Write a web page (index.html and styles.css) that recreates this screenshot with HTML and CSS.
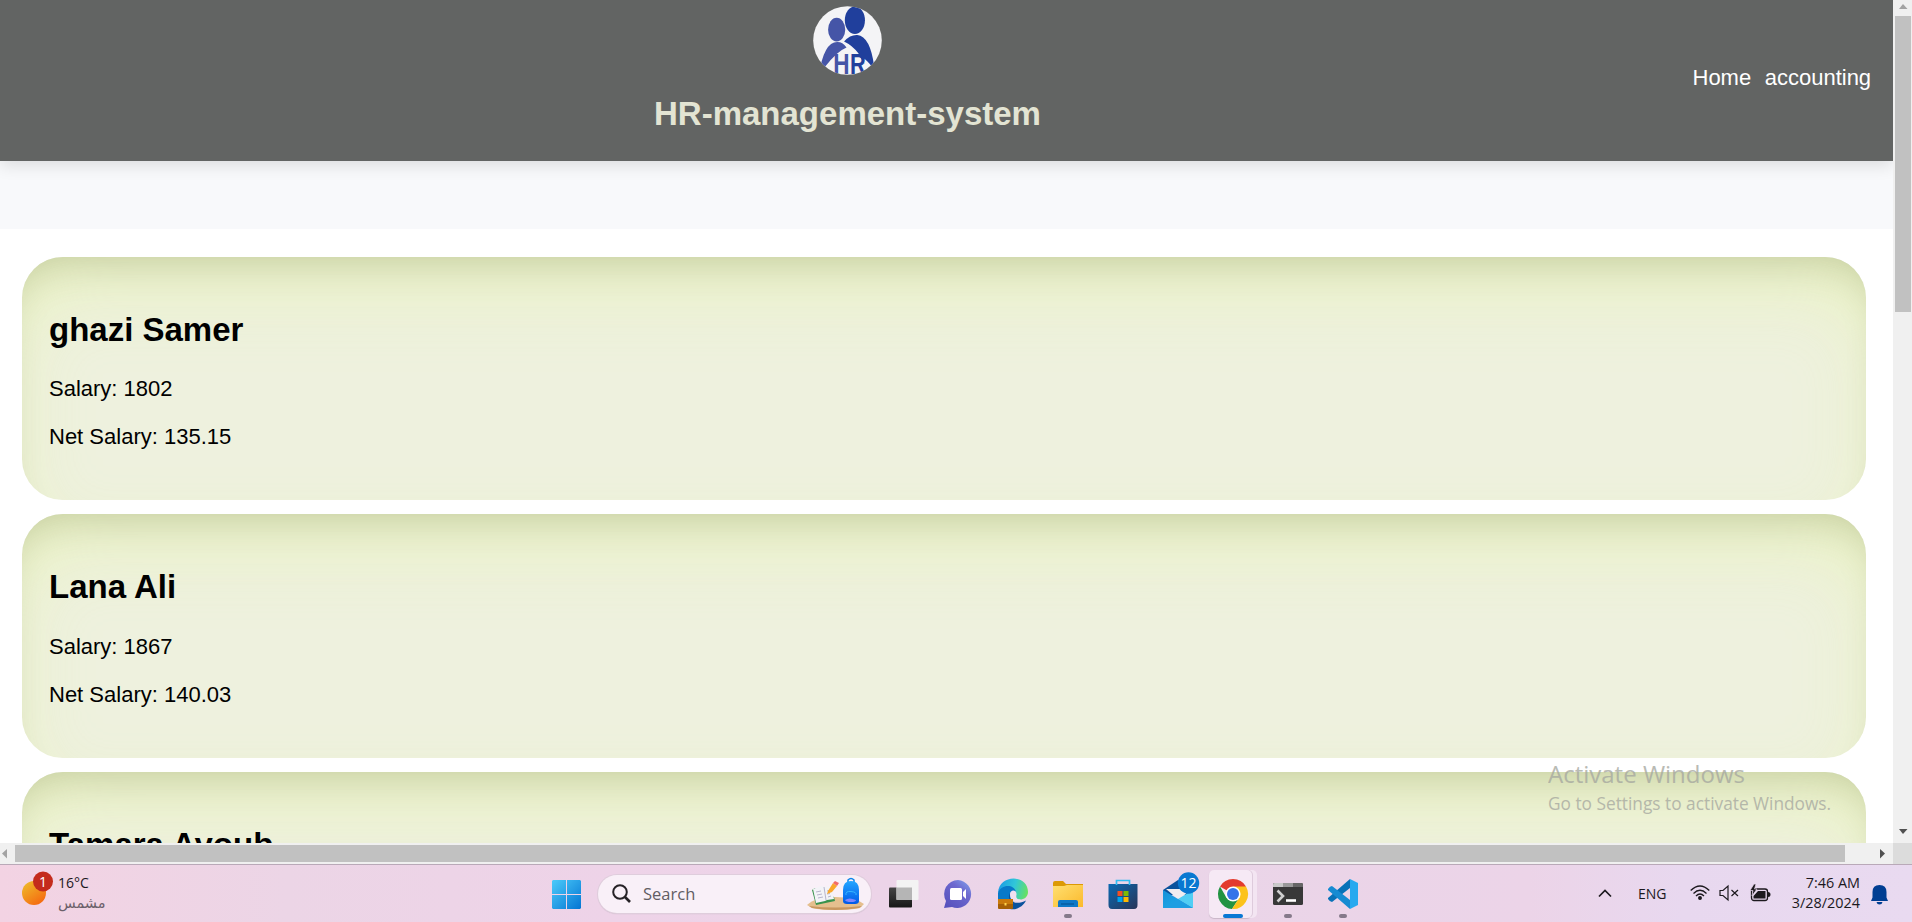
FILE: index.html
```html
<!DOCTYPE html>
<html lang="en">
<head>
<meta charset="utf-8">
<title>HR-management-system</title>
<link rel="stylesheet" href="styles.css">
</head>
<body>
<div class="window">
  <main class="viewport">
    <header class="header">
      <div class="brand">
        <svg class="logo" viewBox="0 0 70 70">
          <defs><clipPath id="round"><circle cx="35" cy="35" r="34.8"/></clipPath></defs>
          <g clip-path="url(#round)">
            <rect width="70" height="70" fill="#f4f4f6"/>
            <ellipse cx="24" cy="24" rx="8.7" ry="12" fill="#4555a7"/>
            <path d="M6 70Q11 36 25 36.500Q30 36.500 34 42Q24 46 12 62Z" fill="#4555a7"/>
            <ellipse cx="42.500" cy="14.500" rx="10.200" ry="14" fill="#203f9c"/>
            <path d="M31.500 36Q38 29 45 29.500Q58 31 62 61L60 62Q55 55 51 53L52 59L46 48Q40 40 31.500 36Z" fill="#203f9c"/>
            <text x="20.500" y="68.500" class="logo-h" textLength="16.500" lengthAdjust="spacingAndGlyphs">H</text>
            <text x="37.500" y="68.500" class="logo-r" textLength="16" lengthAdjust="spacingAndGlyphs">R</text>
          </g>
        </svg>
        <h1 class="title">HR-management-system</h1>
      </div>
      <nav class="nav"><a>Home</a><a>accounting</a></nav>
    </header>
    <div class="band"></div>
    <section class="cards">
      <article class="card"><h2>ghazi Samer</h2><p>Salary: 1802</p><p>Net Salary: 135.15</p></article>
      <article class="card"><h2>Lana Ali</h2><p>Salary: 1867</p><p>Net Salary: 140.03</p></article>
      <article class="card"><h2>Tamara Ayoub</h2><p></p><p></p></article>
    </section>
  </main>
  <div class="vscroll">
    <svg class="varrow" viewBox="0 0 19 16"><path d="M6 9L10 4L14.500 9Z" fill="#a3a3a3"/></svg>
    <div class="vthumb"></div>
    <svg class="varrow vdown" viewBox="0 0 19 16"><path d="M6 5H14.500L10 10Z" fill="#505050"/></svg>
  </div>
  <div class="hscroll">
    <svg class="harrow" viewBox="0 0 15 21"><path d="M7 6V15.500L2 10.500Z" fill="#a3a3a3"/></svg>
    <div class="hthumb"></div>
    <svg class="hright" viewBox="0 0 15 21"><path d="M2 6V15.500L7 10.500Z" fill="#505050"/></svg>
  </div>
  <div class="corner"></div>
</div>
<div class="watermark"><div class="wm-title">Activate Windows</div><div class="wm-text">Go to Settings to activate Windows.</div></div>
<footer class="taskbar">
  <div class="weather">
    <svg width="34" height="38" viewBox="0 0 34 38">
      <defs><linearGradient id="sun" x1="0" y1="0" x2=".7" y2="1"><stop offset="0" stop-color="#eec12d"/><stop offset="1" stop-color="#f56a10"/></linearGradient></defs>
      <circle cx="12" cy="22" r="12" fill="url(#sun)"/><circle cx="21" cy="10.500" r="10" fill="#c42b1c"/>
      <text x="21" y="15.500" class="badge">1</text>
    </svg>
    <div class="wtext"><span>16°C</span><span class="sunny" lang="ar">مشمس</span></div>
  </div>
  <svg class="start" viewBox="0 0 29 29">
    <defs><linearGradient id="win" x1="0" y1="0" x2="1" y2="1" gradientUnits="objectBoundingBox"><stop offset="0" stop-color="#4ccbfa"/><stop offset="1" stop-color="#0475d3"/></linearGradient></defs>
    <path d="M1 0H14V14H0V1ZM15 0H28L29 1V14H15ZM0 15H14V29H1L0 28ZM15 15H29V28L28 29H15Z" fill="url(#win)"/>
  </svg>
  <div class="search">
    <svg width="20" height="20" viewBox="0 0 20 20" fill="none" stroke="#262226"><circle cx="8" cy="8" r="6.800" stroke-width="2"/><path d="M13 13L18 18" stroke-width="2.600"/></svg>
    <span>Search</span>
    <svg class="study" width="58" height="33" viewBox="0 0 58 33">
      <defs><linearGradient id="bag" x1="0" y1="0" x2="0" y2="1"><stop offset="0" stop-color="#24a5ff"/><stop offset="1" stop-color="#0059e8"/></linearGradient></defs>
      <path d="M0 27Q8 19 28 19T57 26L53 30Q42 32 28 32T5 30Z" fill="#e5bf8e"/><path d="M2 28Q28 31 55 28L52 30Q28 34 5 30Z" fill="#c8975f"/>
      <path d="M5 12L8 10L27 19L28 23L9 27Z" fill="#39934d"/><path d="M6 11L14 8L18 9L24 8L27 21L20 22L18 23L9 25Z" fill="#f3f3f8"/><path d="M17 9L19 22M9 14L14 13M10 17L15 16M11 20L16 19M20 13L22 12.500M20 16L23 15.500M21 19L24 18" stroke="#b7b5cc" fill="none"/>
      <path d="M21 13L26 5L30 8L25 14L20 16Z" fill="#f9a72b"/><path d="M26 5L28 3L32 5L30 8Z" fill="#f36b66"/>
      <path d="M41 4V2Q44-1 47 2V4" fill="none" stroke="#0986eb" stroke-width="1.500"/><path d="M36 12Q36 3 44 3T52 12V23Q52 26 48 26H40Q36 26 36 23Z" fill="url(#bag)"/><path d="M39 17Q38 13 44 13.500T49 17" fill="none" stroke="#37b6ff"/><path d="M38 22Q42 19 49 22Q49 24 44 24T38 22Z" fill="#7c86ff"/>
    </svg>
  </div>
  <div class="apps">
    <div class="app"><svg viewBox="0 0 30 30">
      <defs><linearGradient id="tv" x1="0" y1="0" x2="0" y2="1"><stop offset="0" stop-color="#444"/><stop offset="1" stop-color="#171717"/></linearGradient></defs>
      <rect x="1" y="8.500" width="23" height="20" rx="1" fill="url(#tv)"/><rect x="8.500" y="1" width="22" height="20" rx="1" fill="#f3f3f3"/><path d="M8.500 8.500H24V21H8.500Z" fill="#b5b5b5"/></svg></div>
    <div class="app"><svg viewBox="0 0 30 30">
      <defs><linearGradient id="chat" x1="1" y1="0" x2=".2" y2="1"><stop offset="0" stop-color="#82a6ee"/><stop offset=".4" stop-color="#6d69cf"/><stop offset="1" stop-color="#5751bd"/></linearGradient></defs>
      <path d="M15 1A14 14 0 1 1 9 28L1 29L3 22A14 14 0 0 1 15 1Z" fill="url(#chat)"/><rect x="7" y="9" width="12" height="12" rx="1.500" fill="#fff"/><path d="M20 13L23 10V20L20 17Z" fill="#fff"/></svg></div>
    <div class="app"><svg viewBox="0 0 30 30">
      <defs><linearGradient id="edge" x1="0" y1=".5" x2="1" y2=".7"><stop offset="0" stop-color="#1d9ee4"/><stop offset=".5" stop-color="#31c7d8"/><stop offset="1" stop-color="#6be25a"/></linearGradient></defs>
      <path d="M0 14C1-5 30-5 30 13C30 18 26 20.500 22 20.500Q17 20.500 18 17C20 8 7 6 0 14Z" fill="url(#edge)"/><path d="M0 21V14C3 5 16 5 18 13C12 9 10 20 16 23V30H4Z" fill="#0879c9"/><path d="M12 14C7 24 20 26 28 21.500C24 30 15 31 12 30Z" fill="#0b529d"/><path d="M12 15C12 11 18 10 18.500 15C18 18 18 20 22 20.500L24 22C16 24 12 20 12 15Z" fill="#f2e0ef"/><rect y="20" width="15" height="10" rx="1" fill="#a66005"/><path d="M0 20H15V25H0Z" fill="#c97a0b"/><rect x="6.500" y="24" width="2" height="2.500" fill="#ffd44c"/></svg></div>
    <div class="app"><svg viewBox="0 0 30 30">
      <defs><linearGradient id="folder" x1="0" y1="0" x2="1" y2="1"><stop offset="0" stop-color="#ffdf70"/><stop offset="1" stop-color="#fbb92c"/></linearGradient></defs>
      <path d="M0 4Q0 2 2 2H10L13 5H30V14H0Z" fill="#dc9904"/><path d="M0 7H11L14 6H30V28H0Z" fill="url(#folder)"/><path d="M5 28V23Q5 21 7 21H23Q25 21 25 23V28Z" fill="#0f78c7"/><path d="M8 25H21" stroke="#07589c" stroke-width="1.300"/></svg><i class="dot"></i></div>
    <div class="app"><svg viewBox="0 0 30 30">
      <defs><linearGradient id="store" x1="0" y1="0" x2="1" y2="1"><stop offset="0" stop-color="#0a69b2"/><stop offset="1" stop-color="#293558"/></linearGradient></defs>
      <path d="M.5 5H29.500V26Q29.500 30 26 30H4Q.5 30 .5 26Z" fill="url(#store)"/><path d="M8.500 6V1.500H21.500V6" fill="none" stroke="#31bdf2" stroke-width="1.700"/><path d="M9.500 12H14.500V17H9.500Z" fill="#f25022"/><path d="M15.500 12H20.500V17H15.500Z" fill="#7fba00"/><path d="M9.500 18H14.500V23H9.500Z" fill="#00a4ef"/><path d="M15.500 18H20.500V23H15.500Z" fill="#ffb900"/></svg></div>
    <div class="app"><svg viewBox="0 0 30 30">
      <defs><linearGradient id="mail" x1="0" y1="0" x2="1" y2="1"><stop offset="0" stop-color="#1590d9"/><stop offset="1" stop-color="#23b0eb"/></linearGradient></defs>
      <path d="M0 11L15 1L30 11V16H0Z" fill="#0b519c"/><path d="M3 10H28L16 21Z" fill="#f0edf0"/><path d="M0 11L30 29H0Z" fill="url(#mail)"/><path d="M30 11V29L15 20Z" fill="#50cef4"/><path d="M0 29L15 20L30 29Z" fill="#1e9ee2"/><circle cx="25.500" cy="4" r="10.700" fill="#0878d1"/><text x="25.500" y="9" class="badge">12</text></svg></div>
    <div class="app"><div class="active"></div><svg viewBox="0 0 30 30">
      <path d="M15 15L2 7.500A15 15 0 0 1 28 7.500Z" fill="#e33b2e"/><path d="M2 7.500A15 15 0 0 0 14 30L21.500 18.500L15 15L8.500 18.700Z" fill="#229342"/><path d="M15 7.500H28A15 15 0 0 1 14 30L21.500 18.500Z" fill="#fcc21b"/><circle cx="15" cy="15" r="7.600" fill="#fff"/><circle cx="15" cy="15" r="6" fill="#3474e9"/></svg><i class="dot wide"></i></div>
    <div class="app"><svg viewBox="0 0 30 30"><rect y="4" width="30" height="22" rx="1.500" fill="#383838"/><path d="M0 8V5.500Q0 4 1.500 4H10V8Z" fill="#c9c9c9"/><path d="M10 4H20V8H10Z" fill="#999"/><path d="M20 4H28.500Q30 4 30 5.500V8H20Z" fill="#666"/><path d="M4.500 11.500L10 17L4.500 22.500" fill="none" stroke="#d0d0d0" stroke-width="2.600"/><path d="M13 21.500H23" stroke="#fff" stroke-width="2.600"/></svg><i class="dot"></i></div>
    <div class="app"><svg viewBox="0 0 30 30"><path d="M22 0L30 4V26L22 30Z" fill="#27a9ef"/><path d="M22 0V9L4 23Q2 23 0 20V19Z" fill="#0872b8"/><path d="M0 11V10Q2 7 4 7L22 21V30Z" fill="#168bd2"/></svg><i class="dot"></i></div>
  </div>
  <div class="tray">
    <svg class="chev" width="14" height="9" viewBox="0 0 14 9" fill="none" stroke="#1c191e" stroke-width="1.700"><path d="M1 7.500L7 1.500L13 7.500"/></svg>
    <span class="lang">ENG</span>
    <svg class="wifi" width="20" height="16" viewBox="0 0 20 16" fill="none" stroke="#1c191e" stroke-width="1.300"><path d="M.7 5.500Q10-3.500 19.300 5.500M3.500 8.500Q10 2 16.500 8.500M6 11Q10 7 14 11"/><circle cx="10" cy="13" r="1.300" fill="#1c191e"/></svg>
    <svg class="vol" width="20" height="16" viewBox="0 0 20 16" fill="none" stroke="#1c191e" stroke-width="1.200"><path d="M1 5.500H4L9 1V15L4 10.500H1ZM12.500 5L19 11M19 5L12.500 11"/></svg>
    <svg class="bat" width="21" height="18" viewBox="0 0 21 18"><rect x="1.500" y="5" width="16" height="11.500" rx="2.500" fill="none" stroke="#1c191e" stroke-width="1.300"/><path d="M18 8Q20.500 8 20.500 10.500T18 13ZM7 7H15.500V14.500H3.500V12L8 7Z" fill="#1c191e"/><path d="M4 0L0 6.500H3L2 12L7 5H4.500L6 0Z" fill="#1c191e" stroke="#ead8ee" stroke-width=".7"/></svg>
    <div class="clock"><span>7:46 AM</span><span>3/28/2024</span></div>
    <svg class="bell" width="17" height="20" viewBox="0 0 17 20" fill="#003e92"><path d="M0 16L1.500 12.500V7Q1.500 0 8.500 0T15.500 7V12.500L17 16ZM5.500 17H11.500Q11 19.500 8.500 19.500T5.500 17Z"/></svg>
  </div>
</footer>
</body>
</html>
```
FILE: styles.css
```css
* { box-sizing: border-box; }
body { margin: 0; width: 1912px; height: 922px; overflow: hidden; position: relative; background: #fff; font-family: "Liberation Sans", Arial, sans-serif; color: #000; }
svg { display: block; flex: none; overflow: visible; }
.window { display: grid; grid-template-columns: 1893px 19px; grid-template-rows: 843px 21px; }
.viewport { overflow: hidden; }
.header { display: flex; height: 161px; background: #626463; box-shadow: 0 4px 16px rgba(0,0,0,.12); position: relative; }
.brand { width: 1695px; display: flex; flex-direction: column; align-items: center; padding-top: 6px; }
.logo { width: 69px; height: 69px; }
.logo-h, .logo-r { font: bold 29px "Liberation Sans", Arial, sans-serif; fill: #4555a7; }
.logo-r { fill: #203f9c; }
.title { margin: 20px 0 0; font-size: 33px; line-height: 38px; color: #e3e4d3; }
.nav { display: flex; gap: 13.5px; margin-left: -2.5px; padding-top: 64.5px; font-size: 22px; line-height: 26px; color: #fff; }
.band { height: 68px; background: #f8f9fb; }
.cards { display: flex; flex-direction: column; gap: 13.75px; padding: 27.7px 27px 0 22px; }
.card { flex: none; height: 243.75px; padding: 26.9px 27px; border-radius: 41px; background: #eef1de; box-shadow: inset 0 41px 82px -16.5px rgba(227,245,142,.42), inset 0 25px 44px -27px rgba(0,0,0,.3); }
.card h2 { margin: 27.4px 0; font-size: 33px; line-height: 38px; }
.card p { margin: 0 0 22px; font-size: 22px; line-height: 26px; }
.vscroll { background: #f0f0f0; display: flex; flex-direction: column; padding-left: 2px; }
.varrow { width: 19px; height: 16px; margin-left: -2px; }
.vthumb { width: 16px; height: 296px; background: #c1c1c1; }
.vdown { margin-top: auto; margin-bottom: 3px; }
.hscroll { background: #f0f0f0; display: flex; align-items: center; }
.harrow, .hright { width: 15px; height: 21px; }
.hthumb { width: 1830px; height: 17px; background: #c1c1c1; }
.hright { margin-left: 33px; }
.corner { background: #dcdcdc; }
.watermark { position: absolute; left: 1548px; top: 756px; font-family: "Open Sans", "Noto Sans", sans-serif; color: #a6a8a0; opacity: .78; white-space: nowrap; }
.wm-title { font-size: 24px; line-height: 36px; }
.wm-text { font-size: 17.3px; line-height: 24px; }
.taskbar { height: 58px; display: flex; border-top: 1px solid #b9a9b8; background: linear-gradient(90deg, #f3d3e3 0, #ecd5e6 15%, #eed3e8 32%, #ead5e8 60%, #ecd4e8 80%, #e8d8ef 88%, #e9daf0 100%); font-family: "Open Sans", "Noto Sans", sans-serif; color: #1c191e; }
.weather { width: 552px; padding: 6px 0 0 22px; display: flex; gap: 2px; }
.wtext { display: flex; flex-direction: column; padding-top: 1px; font-size: 14px; line-height: 21px; }
.sunny { color: #6b606a; font-family: "DejaVu Sans", sans-serif; font-size: 14.5px; }
.badge { font: 14px "Open Sans", sans-serif; fill: #fff; text-anchor: middle; }
.start { width: 29px; height: 29px; margin-top: 15px; }
.search { width: 273px; height: 38px; margin: 10px 4px 0 17px; padding-left: 14px; border-radius: 19px; background: #f9f0f8; box-shadow: 0 0 0 1px #dfcddc, 0 1px 1px #b9aab7; display: flex; align-items: center; gap: 11px; font-size: 16.5px; color: #625d63; }
.search span { margin-top: -2px; }
.study { margin-left: auto; margin-right: 6px; }
.apps { display: flex; width: 494px; }
.app { flex: none; width: 55px; position: relative; padding: 14px 0 0 12.5px; }
.app svg { width: 30px; height: 30px; position: relative; }
.dot { position: absolute; left: 24px; top: 49px; width: 8px; height: 4px; border-radius: 2px; background: #85798a; }
.wide { left: 18px; width: 20px; background: #0878d4; }
.active { position: absolute; left: 4px; top: 5px; width: 43px; height: 48px; border-radius: 5px; background: #f6e9f5; box-shadow: 1px 0 0 #decbdc, 5px 0 0 #f3e5f2, 0 1px 1px #c9b6c7; }
.tray { display: flex; flex: 1; font-size: 14px; padding-left: 229px; }
.chev { margin-top: 24px; }
.lang { margin: 18px 0 0 26px; width: 28px; line-height: 21px; }
.wifi { margin: 20px 0 0 24px; }
.vol { margin: 20px 0 0 9px; }
.bat { margin: 19px 0 0 11px; }
.clock { display: flex; flex-direction: column; align-items: flex-end; margin: 8px 0 0; width: 89px; font-size: 14.4px; line-height: 20px; }
.bell { margin: 20px 0 0 11px; }
```
